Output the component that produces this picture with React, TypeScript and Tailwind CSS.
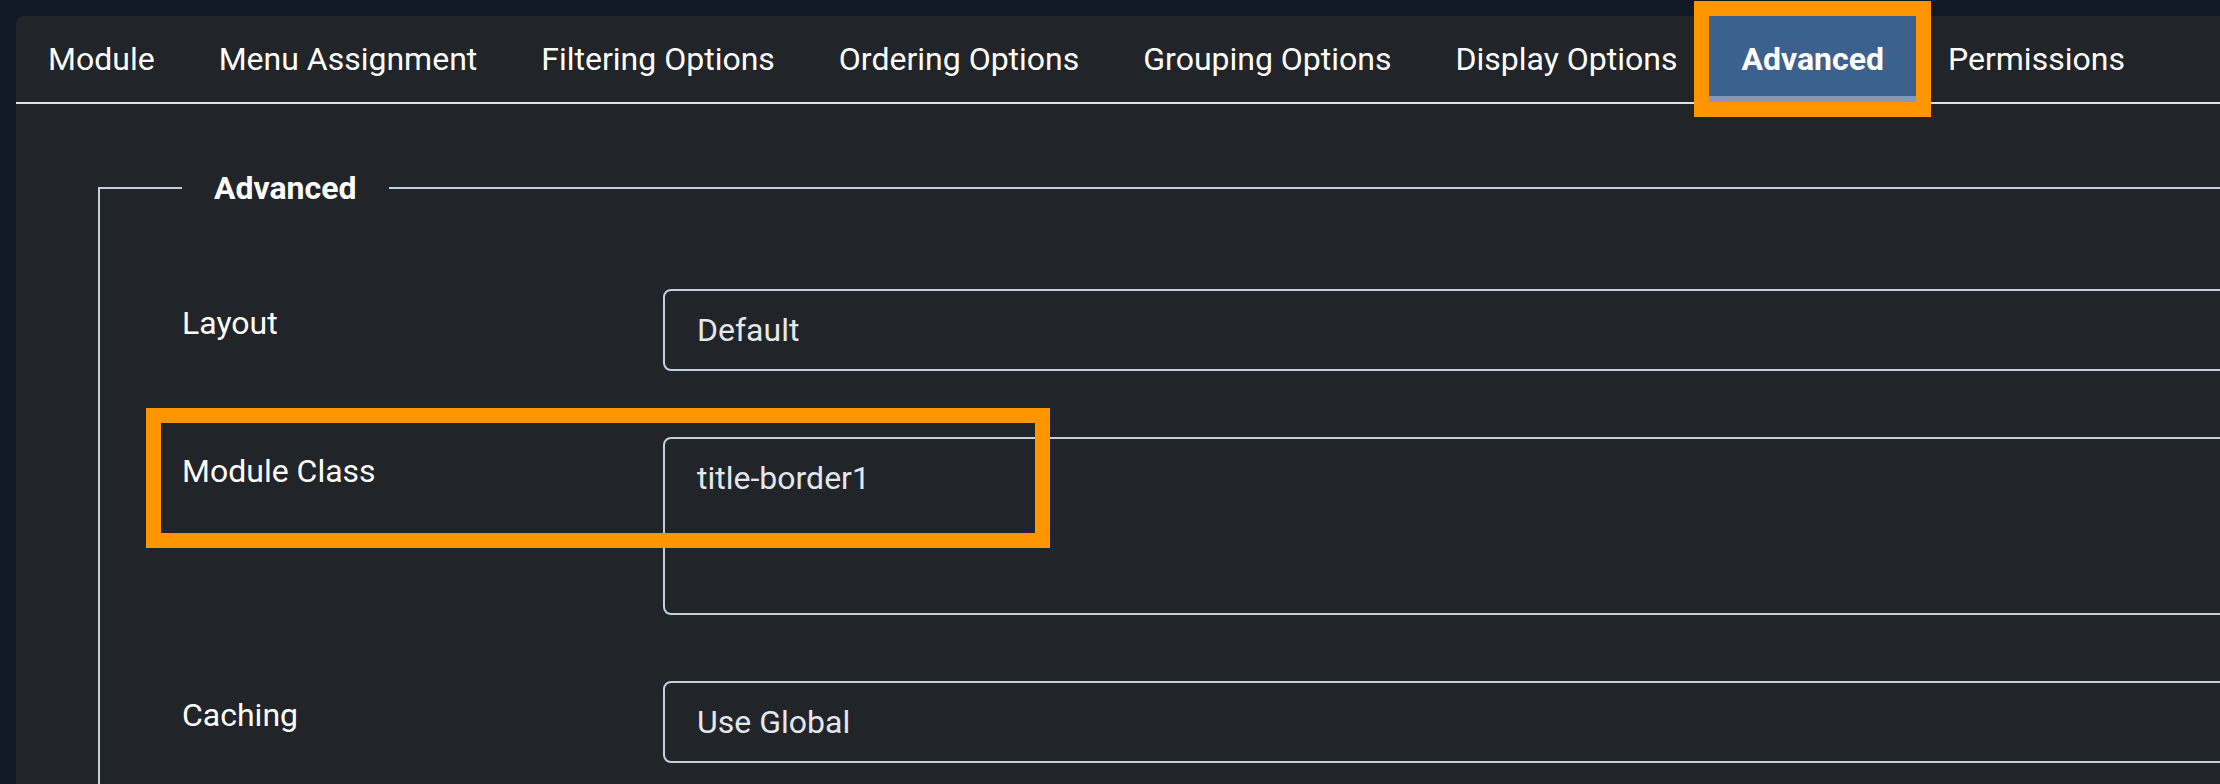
import React from "react";

const tabs = [
  "Module",
  "Menu Assignment",
  "Filtering Options",
  "Ordering Options",
  "Grouping Options",
  "Display Options",
  "Advanced",
  "Permissions",
];

function Row({
  label,
  value,
  tall,
  highlight,
}: {
  label: string;
  value: string;
  tall?: boolean;
  highlight?: boolean;
}) {
  return (
    <div className="relative flex">
      <div className="w-[481px] shrink-0 pt-[10px] text-[32px] leading-[48px] text-white">
        {label}
      </div>
      <div
        className={
          tall
            ? "h-[178px] flex-1 rounded-[8px] border-2 border-[#c3cfe0] px-[32px] py-[15px] text-[32px] leading-[48px] text-[#e4e8ee]"
            : "h-[82px] flex-1 rounded-[8px] border-2 border-[#c3cfe0] px-[32px] py-[15px] text-[32px] leading-[48px] text-[#e4e8ee]"
        }
      >
        {value}
      </div>
      {highlight && (
        <div className="pointer-events-none absolute left-[-36px] top-[-29px] z-10 h-[140px] w-[904px] border-[15px] border-[#ff9500]" />
      )}
    </div>
  );
}

export default function App() {
  return (
    <div className="h-[784px] w-[2220px] overflow-hidden bg-[#111826] pl-4 pt-4 [font-family:Roboto,'Liberation_Sans',sans-serif]">
      <div className="h-[900px] w-[2500px] rounded-tl-[8px] bg-[#212428]">
        <div className="flex h-[88px] border-b-2 border-[#dfe3e8]">
          {tabs.map((t) =>
            t === "Advanced" ? (
              <div
                key={t}
                className="relative flex h-[86px] items-center bg-[#3d618f] px-8 text-[32px] font-bold text-white shadow-[inset_0_-6px_0_#8399b5]"
              >
                {t}
                <div className="pointer-events-none absolute -inset-[15px] z-10 border-[15px] border-[#ff9500]" />
              </div>
            ) : (
              <div
                key={t}
                className="flex h-[86px] items-center px-8 text-[32px] text-white"
              >
                {t}
              </div>
            )
          )}
        </div>
        <div className="pl-[82px] pt-[60px]">
          <fieldset className="w-[2300px] border-2 border-[#c3cfe0] pl-[82px] pt-[77px] pb-[80px]">
            <legend className="px-8 text-[32px] font-bold leading-[48px] text-white">
              Advanced
            </legend>
            <div className="flex flex-col gap-[66px]">
              <Row label="Layout" value="Default" />
              <Row label="Module Class" value="title-border1" tall highlight />
              <Row label="Caching" value="Use Global" />
            </div>
          </fieldset>
        </div>
      </div>
    </div>
  );
}
